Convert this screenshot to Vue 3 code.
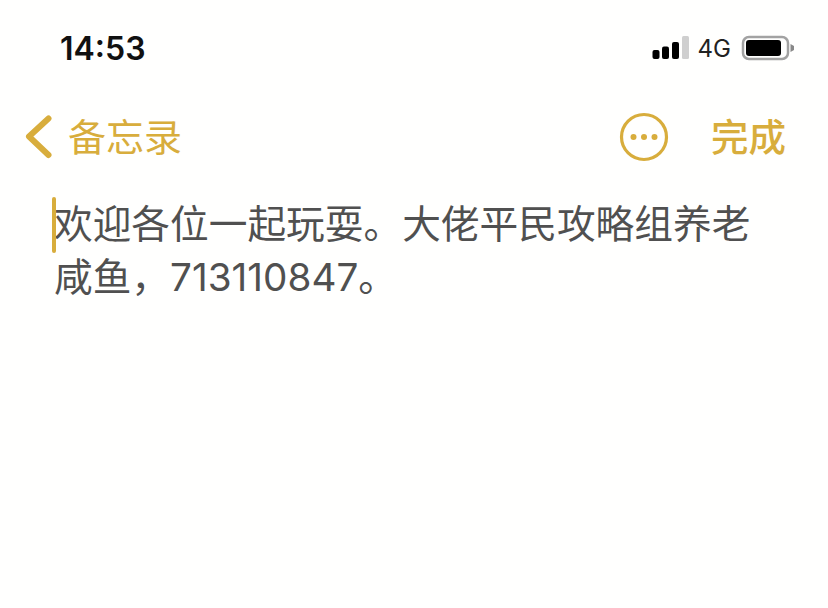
<script setup>
const noteLines = ['欢迎各位一起玩耍。大佬平民攻略组养老', '咸鱼，713110847。']
</script>

<template>
  <div class="phone">
    <div class="status-bar">
      <span class="time">14:53</span>
      <div class="status-icons">
        <svg class="signal" width="38" height="24" viewBox="0 0 38 24">
          <rect x="0.5" y="14" width="7" height="9" rx="2" fill="#000" />
          <rect x="10" y="10.5" width="7" height="12.5" rx="2" fill="#000" />
          <rect x="20" y="6" width="7" height="17" rx="2" fill="#000" />
          <rect x="30" y="0" width="7" height="23" rx="1.5" fill="#cfcfcf" />
        </svg>
        <span class="network">4G</span>
        <svg class="battery" width="54" height="26" viewBox="0 0 54 26">
          <rect x="2" y="2" width="45" height="22" rx="6" fill="none" stroke="#a2a2a2" stroke-width="2.5" />
          <rect x="5" y="5" width="35" height="16" rx="3" fill="#000" />
          <path d="M49.5 9 L53 11 L53 15 L49.5 17 Z" fill="#888" />
        </svg>
      </div>
    </div>

    <div class="nav-bar">
      <div class="back">
        <svg width="28" height="44" viewBox="0 0 28 44">
          <path d="M23.5 3.5 L4 21.5 L23.5 40" fill="none" stroke="#d8ad3c" stroke-width="6" stroke-linecap="round" stroke-linejoin="round" />
        </svg>
        <span class="back-label">备忘录</span>
      </div>
      <div class="actions">
        <svg width="50" height="50" viewBox="0 0 50 50">
          <circle cx="25" cy="25" r="22.5" fill="none" stroke="#d8ad3c" stroke-width="3.2" />
          <circle cx="14.5" cy="25" r="3" fill="#d8ad3c" />
          <circle cx="25" cy="25" r="3" fill="#d8ad3c" />
          <circle cx="35.5" cy="25" r="3" fill="#d8ad3c" />
        </svg>
        <span class="done">完成</span>
      </div>
    </div>

    <div class="note">
      <span class="caret"></span>
      <p v-for="line in noteLines" :key="line">{{ line }}</p>
    </div>
  </div>
</template>

<style>
html,
body {
  margin: 0;
  background: #fff;
}
</style>

<style scoped>
.phone {
  width: 828px;
  height: 608px;
  overflow: hidden;
  background: #fffffe;
  font-family: "Noto Sans CJK SC", "Liberation Sans", sans-serif;
}

.status-bar {
  display: flex;
  justify-content: space-between;
  align-items: center;
  height: 36px;
  padding: 30px 33px 0 60px;
}

.time {
  font-family: Inter, "Liberation Sans", sans-serif;
  font-size: 32px;
  font-weight: 600;
  color: #111;
}

.status-icons {
  display: flex;
  align-items: center;
  gap: 8px;
}

.network {
  font-family: Inter, "Liberation Sans", sans-serif;
  font-size: 24px;
  color: #222;
  margin-right: 2px;
}

.nav-bar {
  display: flex;
  justify-content: space-between;
  align-items: center;
  height: 60px;
  margin-top: 41px;
  padding: 0 42px 0 25px;
  color: #d8ad3c;
}

.back {
  display: flex;
  align-items: center;
  gap: 15px;
}

.back svg {
  display: block;
}

.back-label {
  font-size: 38px;
  line-height: 56px;
  margin-bottom: 4px;
}

.actions {
  display: flex;
  align-items: center;
  gap: 42px;
}

.done {
  font-size: 37.5px;
  font-weight: 500;
  line-height: 56px;
  margin-bottom: 4px;
}

.note {
  position: relative;
  margin-top: 31px;
  padding-left: 54px;
  color: #505050;
  font-family: Inter, "Noto Sans CJK SC", sans-serif;
  font-size: 38.7px;
  line-height: 53px;
}

.note p {
  margin: 0;
  white-space: nowrap;
}

/* text cursor sits over the first glyph */
.caret {
  position: absolute;
  left: 52px;
  top: -1px;
  width: 4px;
  height: 56px;
  border-radius: 2px;
  background: #d8ad3c;
}
</style>
